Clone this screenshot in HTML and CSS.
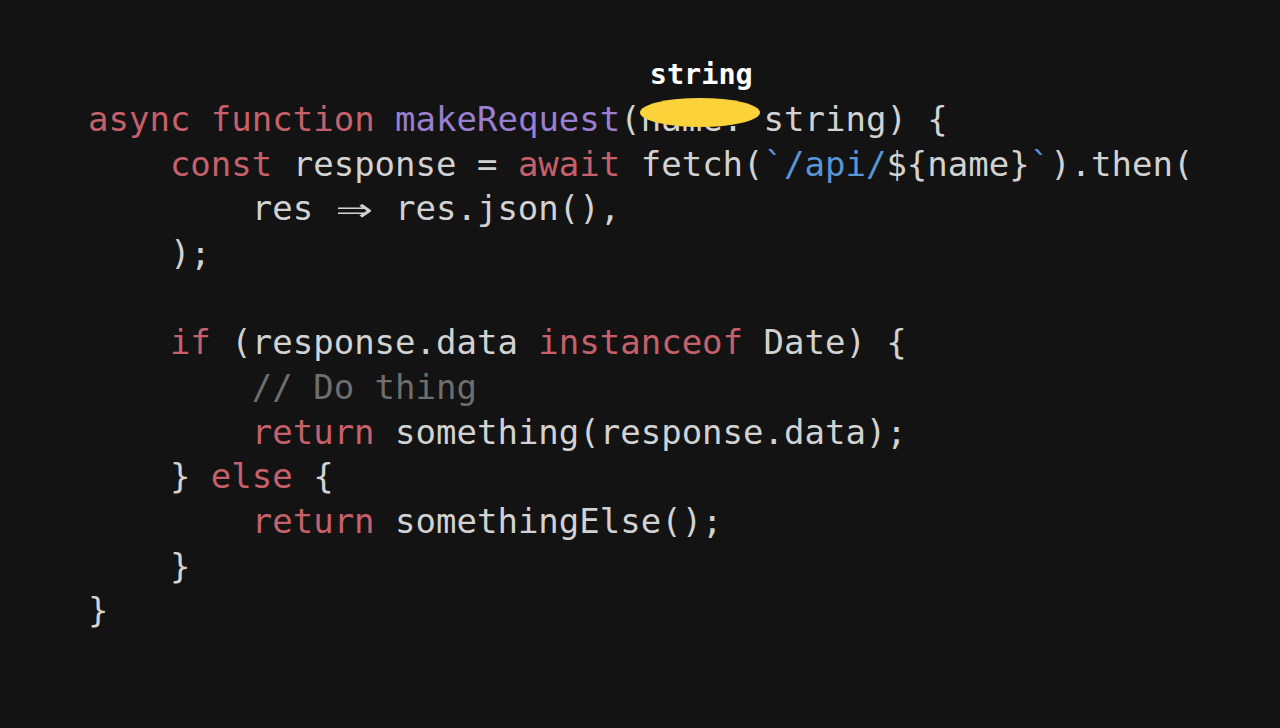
FILE: index.html
```html
<!DOCTYPE html>
<html lang="en">
<head>
<meta charset="utf-8">
<title>Code</title>
<link rel="stylesheet" href="styles.css">
</head>
<body>
<main class="stage">
<pre class="code"><span class="kw">async</span> <span class="kw">function</span> <span class="fn">makeRequest</span>(<span class="param"><span class="param-name">name:</span><span class="blob"></span><span class="hint">string</span></span> string) {
    <span class="kw">const</span> response = <span class="kw">await</span> fetch(<span class="str">`/api/</span>${name}<span class="str">`</span>).then(
        res <span class="lig">⇒</span> res.json(),
    );

    <span class="kw">if</span> (response.data <span class="kw">instanceof</span> Date) {
        <span class="cm">// Do thing</span>
        <span class="kw">return</span> something(response.data);
    } <span class="kw">else</span> {
        <span class="kw">return</span> somethingElse();
    }
}</pre>
</main>
</body>
</html>
```

FILE: styles.css
```css
html, body {
  margin: 0;
  padding: 0;
  background: #131313;
}

.stage {
  width: 1280px;
  height: 728px;
  background: #131313;
  padding: 97px 0 0 88px;
  box-sizing: border-box;
}

.code {
  margin: 0;
  font-family: "DejaVu Sans Mono", "Liberation Mono", monospace;
  font-size: 34px;
  line-height: 44.65px;
  color: #d2d2d2;
}

.kw { color: #c6606b; }
.fn { color: #9a7fd0; }
.str { color: #5a95d6; }
.cm { color: #6e6e6e; }

.lig {
  display: inline-block;
  width: 2ch;
  text-align: center;
  transform: scale(1.8, 1.2);
}

.param {
  position: relative;
}

.param-name {
  color: #d2d2d2;
}

.blob {
  position: absolute;
  left: -1px;
  top: -1px;
  width: 120px;
  height: 29px;
  border-radius: 50%;
  background: #fbd23a;
}

.hint {
  position: absolute;
  left: 9px;
  top: -40px;
  font-size: 28.5px;
  font-weight: bold;
  color: #ffffff;
  line-height: 32px;
}
```
